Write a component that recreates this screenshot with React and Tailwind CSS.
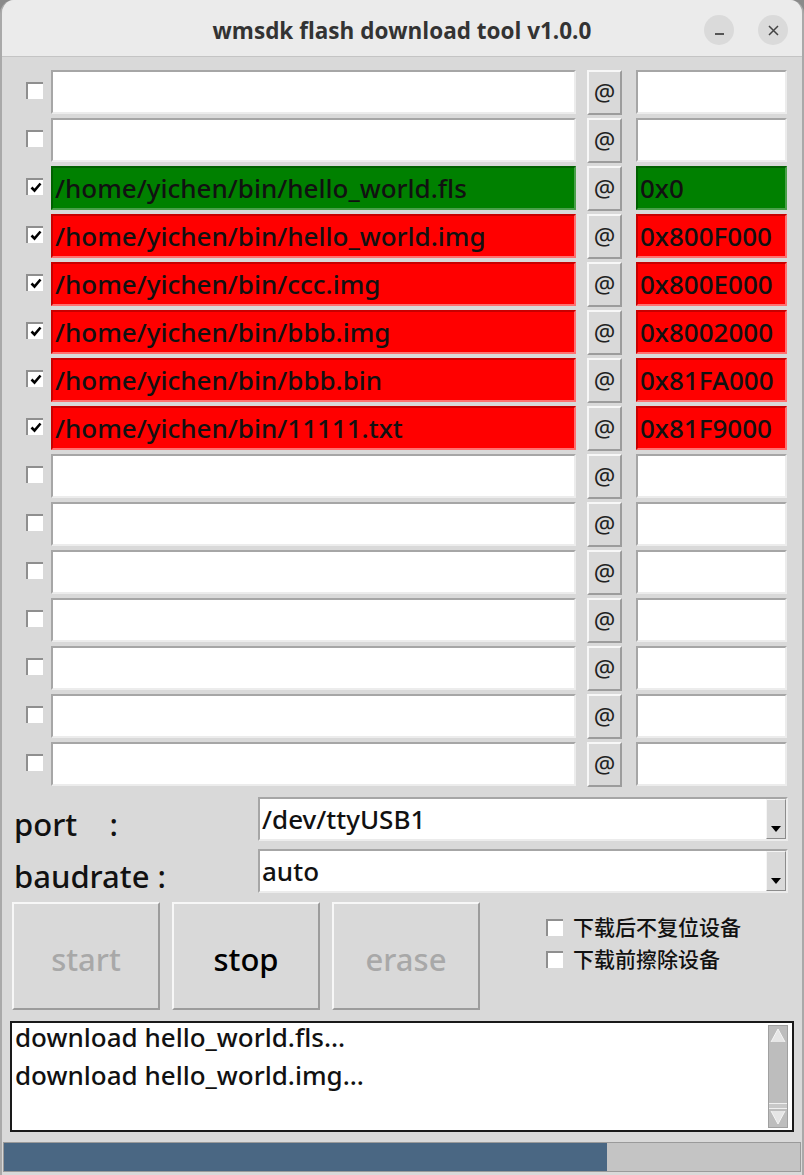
import React from 'react';

const rows = [
  { on: false, path: '', addr: '', color: 'white' },
  { on: false, path: '', addr: '', color: 'white' },
  { on: true, path: '/home/yichen/bin/hello_world.fls', addr: '0x0', color: 'green' },
  { on: true, path: '/home/yichen/bin/hello_world.img', addr: '0x800F000', color: 'red' },
  { on: true, path: '/home/yichen/bin/ccc.img', addr: '0x800E000', color: 'red' },
  { on: true, path: '/home/yichen/bin/bbb.img', addr: '0x8002000', color: 'red' },
  { on: true, path: '/home/yichen/bin/bbb.bin', addr: '0x81FA000', color: 'red' },
  { on: true, path: '/home/yichen/bin/11111.txt', addr: '0x81F9000', color: 'red' },
  ...Array.from({ length: 7 }, () => ({ on: false, path: '', addr: '', color: 'white' })),
];

const fieldColors = {
  white: 'bg-white border-t-[#a6a6a6] border-l-[#a6a6a6] border-b-[#ececec] border-r-[#ececec]',
  green: 'bg-[#008000] border-t-[#006000] border-l-[#006000] border-b-[#4aa04a] border-r-[#4aa04a]',
  red: 'bg-[#ff0000] border-t-[#c80000] border-l-[#c80000] border-b-[#ff7070] border-r-[#ff7070]',
};

const font = { fontFamily: '"Noto Sans", "Noto Sans CJK SC", sans-serif' };

const CheckBox = ({ on }) => (
  <div className="w-[17px] h-[17px] bg-white border-t-2 border-l-2 border-t-[#8f8f8f] border-l-[#8f8f8f] flex items-center justify-center shrink-0">
    {on && (
      <svg width="12" height="11" viewBox="0 0 12 11">
        <path d="M1.5 5.5 L4.5 8.5 L10.5 1.5" fill="none" stroke="#000" strokeWidth="2.6" />
      </svg>
    )}
  </div>
);

const Field = ({ color, children, className }) => (
  <div
    className={`h-[44px] border-2 flex items-center pl-[2px] text-[26px] font-medium text-[#111] whitespace-nowrap overflow-hidden ${fieldColors[color]} ${className}`}
  >
    {children}
  </div>
);

const RaisedButton = ({ children, className }) => (
  <div
    className={`bg-[#d9d9d9] border-2 border-t-[#f7f7f7] border-l-[#f7f7f7] border-b-[#9c9c9c] border-r-[#9c9c9c] flex items-center justify-center ${className}`}
  >
    {children}
  </div>
);

const Combo = ({ value }) => (
  <div className="w-[530px] h-[44px] bg-white border-2 border-t-[#a6a6a6] border-l-[#a6a6a6] border-b-[#ececec] border-r-[#ececec] flex items-center">
    <div className="flex-1 pl-[2px] text-[26px] font-medium text-[#111]">{value}</div>
    <div className="w-[20px] h-[40px] bg-[#d9d9d9] border border-t-[#f5f5f5] border-l-[#f5f5f5] border-b-[#8c8c8c] border-r-[#8c8c8c] flex items-end justify-center pb-[6px]">
      <svg width="10" height="6" viewBox="0 0 10 6">
        <path d="M0 0 H10 L5 6 Z" fill="#000" />
      </svg>
    </div>
  </div>
);

export default function App() {
  return (
    <div className="w-[804px] h-[1175px] bg-[#8a8a8a] overflow-hidden" style={font}>
      <div className="w-[804px] h-[1175px] rounded-t-[14px] overflow-hidden border-x-2 border-[#a9a9a9] bg-[#d9d9d9] flex flex-col">
        {/* title bar */}
        <div className="h-[57px] bg-[#ebebeb] border-b border-[#c4c4c4] flex items-center relative shrink-0">
          <div
            className="flex-1 text-center text-[22.5px] font-bold text-[#333] pt-[6px]"
            style={{ fontFamily: '"Open Sans", "Noto Sans", sans-serif' }}
          >
            wmsdk flash download tool v1.0.0
          </div>
          <div className="absolute right-[14px] top-[15px] flex gap-[24px]">
            <div className="w-[30px] h-[30px] rounded-full bg-[#dadada] flex items-center justify-center">
              <div className="w-[9px] h-[2px] bg-[#555] mt-[8px]" />
            </div>
            <div className="w-[30px] h-[30px] rounded-full bg-[#dadada] flex items-center justify-center">
              <svg width="11" height="11" viewBox="0 0 11 11">
                <path d="M1 1 L10 10 M10 1 L1 10" stroke="#444" strokeWidth="1.5" />
              </svg>
            </div>
          </div>
        </div>

        {/* file rows */}
        <div className="flex flex-col gap-[4px] pt-[13px] pl-[24px]">
          {rows.map((r, i) => (
            <div key={i} className="flex items-center h-[44px]">
              <div className="w-[16px] mr-[9px] -mt-[4px]">
                <CheckBox on={r.on} />
              </div>
              <Field color={r.color} className="w-[525px]">
                {r.path}
              </Field>
              <RaisedButton className="w-[35px] h-[45px] ml-[11px] text-[24px] text-[#222]">@</RaisedButton>
              <Field color={r.color} className="w-[151px] ml-[14px]">
                {r.addr}
              </Field>
            </div>
          ))}
        </div>

        {/* port / baudrate */}
        <div className="flex flex-col gap-[8px] mt-[11px]">
          <div className="flex items-center h-[44px]">
            <div className="w-[256px] h-[44px] pl-[12px] pt-[10px] flex items-center text-[31px] font-medium text-[#111] whitespace-pre">
              port    :
            </div>
            <Combo value="/dev/ttyUSB1" />
          </div>
          <div className="flex items-center h-[44px]">
            <div className="w-[256px] h-[44px] pl-[12px] pt-[10px] flex items-center text-[31px] font-medium text-[#111]">
              baudrate :
            </div>
            <Combo value="auto" />
          </div>
        </div>

        {/* action buttons */}
        <div className="flex items-start mt-[9px] pl-[10px]">
          <RaisedButton className="w-[148px] h-[108px] pt-[6px] text-[31px] font-medium text-[#a8a8a8]">start</RaisedButton>
          <RaisedButton className="w-[148px] h-[108px] pt-[6px] ml-[12px] text-[31px] font-medium text-black">stop</RaisedButton>
          <RaisedButton className="w-[148px] h-[108px] pt-[6px] ml-[12px] text-[31px] font-medium text-[#a8a8a8]">erase</RaisedButton>
          <div className="flex flex-col gap-[15px] ml-[66px] mt-[17px]">
            <div className="flex items-center gap-[10px] h-[17px]">
              <CheckBox on={false} />
              <span className="text-[21px] font-medium text-[#111] leading-[17px]">下载后不复位设备</span>
            </div>
            <div className="flex items-center gap-[10px] h-[17px]">
              <CheckBox on={false} />
              <span className="text-[21px] font-medium text-[#111] leading-[17px]">下载前擦除设备</span>
            </div>
          </div>
        </div>

        {/* log */}
        <div className="mx-[8px] mt-[11px] h-[111px] border-2 border-[#1a1a1a] bg-white flex overflow-hidden">
          <div className="flex-1 pl-[3px] text-[26px] font-medium text-[#111] leading-[38px] -mt-[5px]">
            <div>download hello_world.fls...</div>
            <div>download hello_world.img...</div>
          </div>
          <div className="w-[20px] my-[2px] mr-[4px] bg-[#bdbdbd] border border-[#a0a0a0] flex flex-col justify-between">
            <svg width="18" height="18" viewBox="0 0 18 18">
              <path d="M2 16 L9 3 L16 16" fill="#e6e6e6" stroke="#f5f5f5" strokeWidth="1" />
            </svg>
            <div className="flex flex-col">
              <div className="h-[6px] border-t border-b border-[#f0f0f0] bg-[#c8c8c8]" />
              <svg width="18" height="18" viewBox="0 0 18 18">
                <path d="M2 2 L9 15 L16 2" fill="#e6e6e6" stroke="#f5f5f5" strokeWidth="1" />
              </svg>
            </div>
          </div>
        </div>

        {/* progress */}
        <div className="mt-[10px] mx-[1px] h-[30px] bg-[#c4c4c4] border border-[#9a9a9a] flex">
          <div className="w-[603px] h-full bg-[#4a6783]" />
        </div>
      </div>
    </div>
  );
}
